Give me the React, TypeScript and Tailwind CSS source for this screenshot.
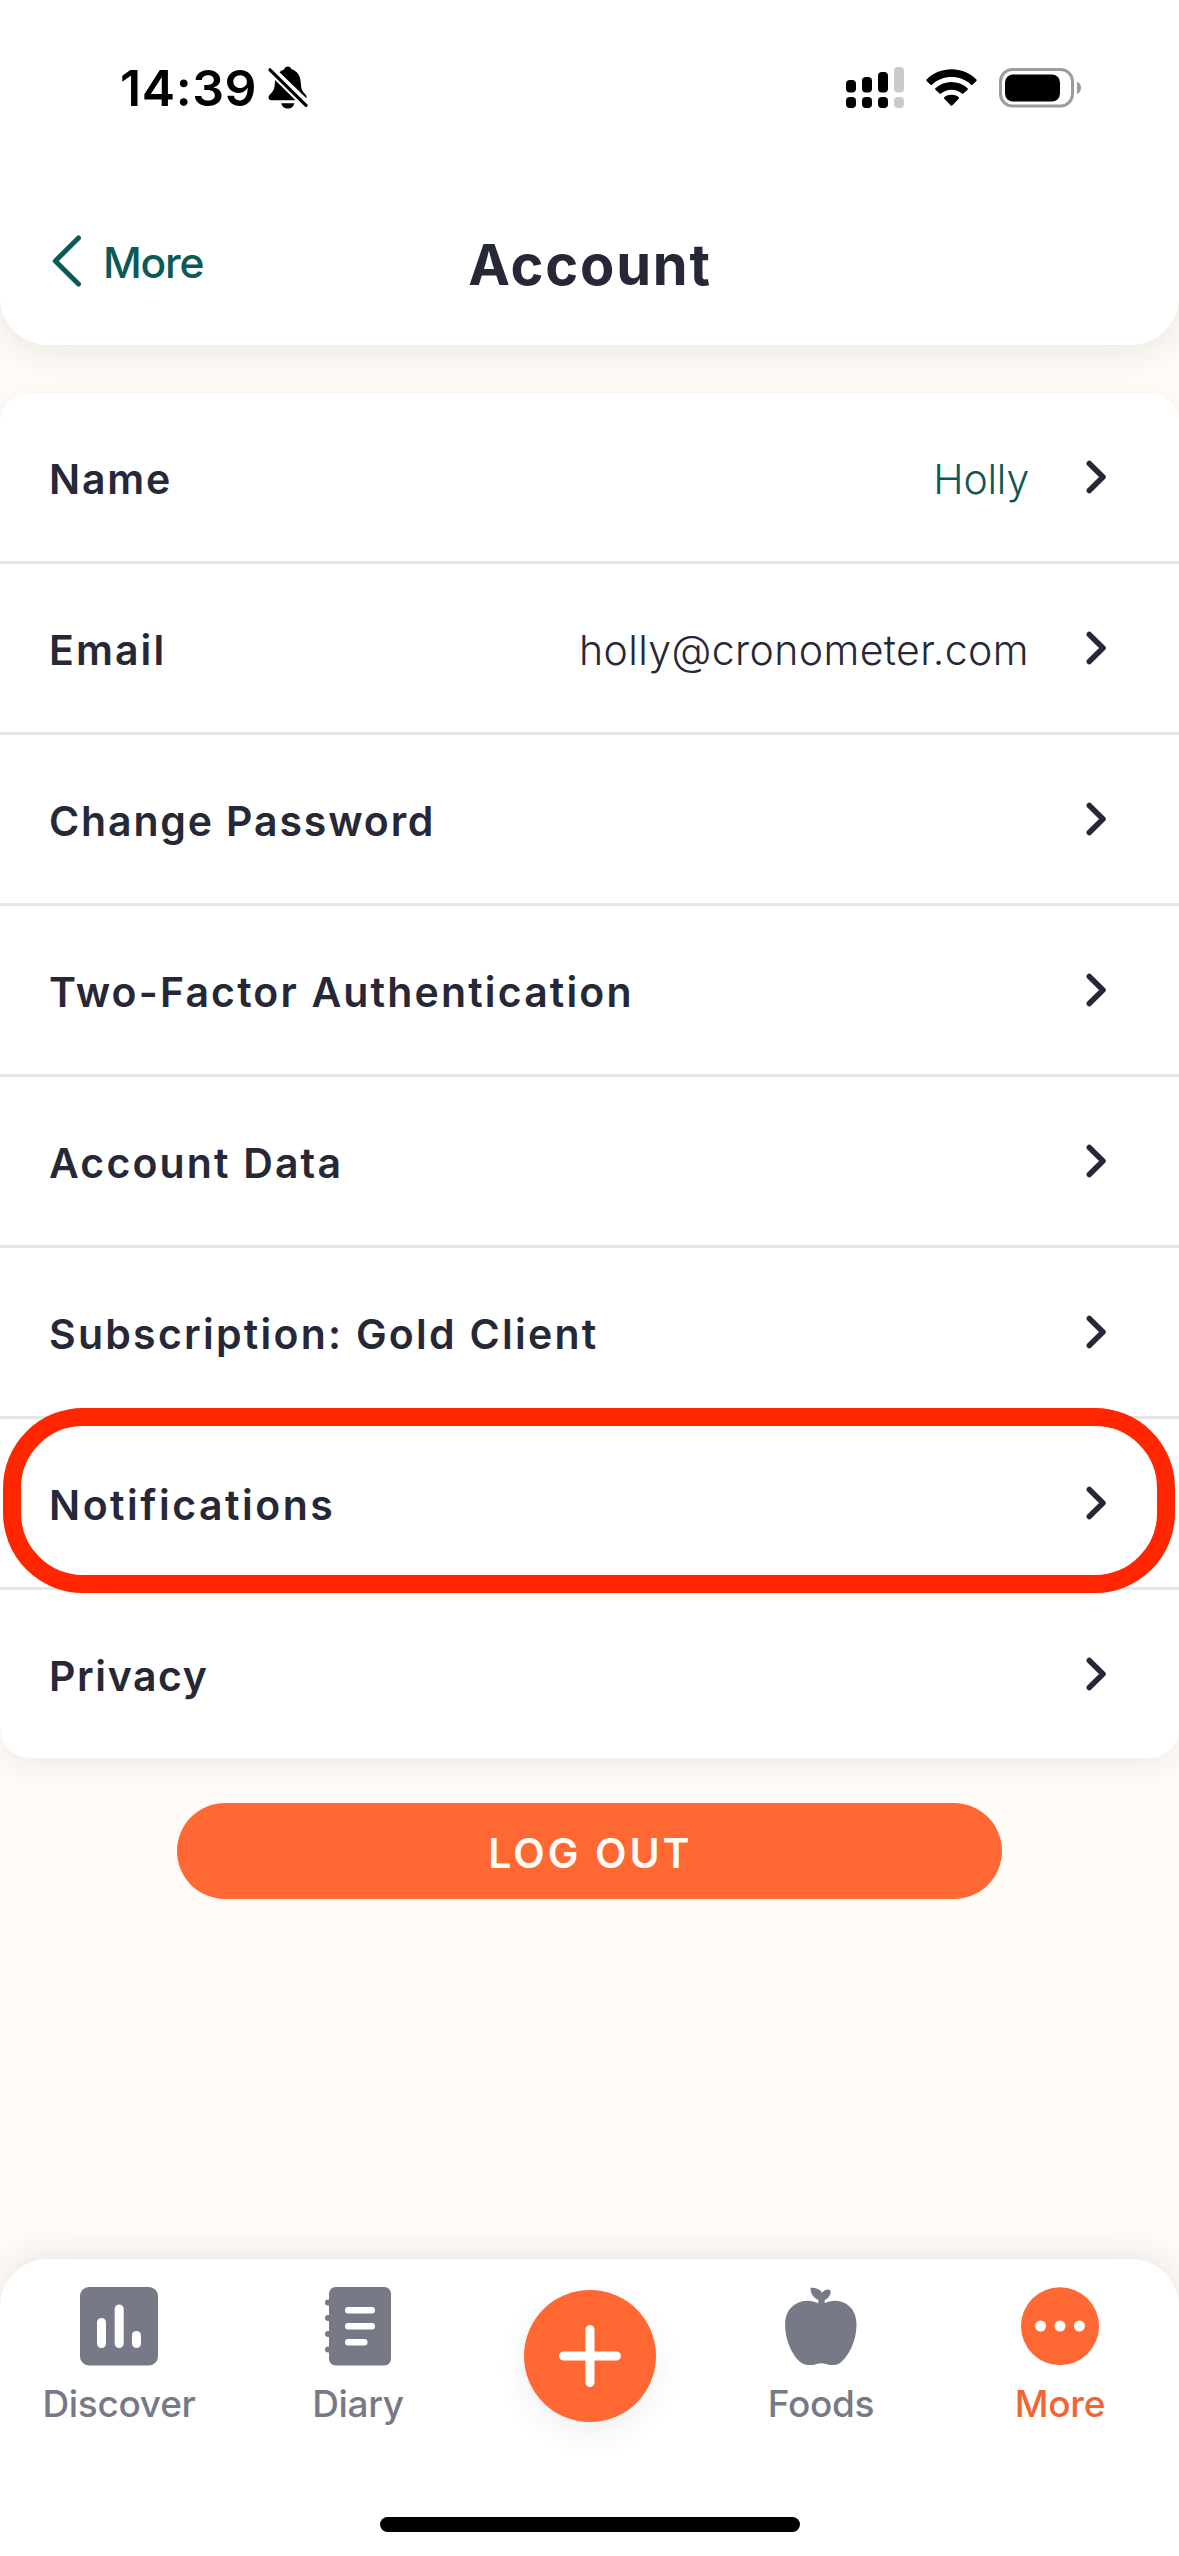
import { clsx } from "clsx";
import type { ReactNode } from "react";

type Row = {
  label: string;
  tracking: string;
  value?: string;
  valueClass?: string;
  highlighted?: boolean;
};

const rows: Row[] = [
  {
    label: "Name",
    tracking: "tracking-[1.8px]",
    value: "Holly",
    valueClass: "text-[#0f5753] tracking-[-0.2px]",
  },
  {
    label: "Email",
    tracking: "tracking-[2.1px]",
    value: "holly@cronometer.com",
    valueClass: "text-[#262838] tracking-[0.4px]",
  },
  { label: "Change Password", tracking: "tracking-[1.85px]" },
  { label: "Two-Factor Authentication", tracking: "tracking-[2.15px]" },
  { label: "Account Data", tracking: "tracking-[2.15px]" },
  { label: "Subscription: Gold Client", tracking: "tracking-[2.25px]" },
  { label: "Notifications", tracking: "tracking-[2.5px]", highlighted: true },
  { label: "Privacy", tracking: "tracking-[1.6px]" },
];

// iOS status bar: time, silent mode, dual SIM signal, wifi and battery
function StatusBar() {
  return (
    <div className="flex h-[174px] items-center justify-between pt-px pl-[120px] pr-[98px]">
      <div className="flex items-center gap-[11px]">
        <span className="text-[50px] leading-none font-semibold tracking-[0.6px]">14:39</span>
        <svg className="h-[44px] w-[40px]" viewBox="0 0 40 44" fill="currentColor">
          <path d="M11.5 6.2C13 4.8 14.6 4 16 3.4C16.6 1.4 18 .4 19.8 .4C21.6 .4 23 1.4 23.6 3.3C29.5 5.3 32.5 10 32.8 16.5C33.1 22 33.5 24.5 37.5 28.5C38.4 29.5 38.8 30.7 38.4 32.2Z" />
          <path d="M7 14L27.5 34.3H3.5C.2 34.3 -.4 30.8 1.8 28.6C6 24.5 6.8 22.5 7 14Z" />
          <path d="M13.2 37.3H26.4C25.6 40.6 23.2 42.6 19.8 42.6C16.4 42.6 14 40.6 13.2 37.3Z" />
          <path d="M2 3.8L38 39.4" fill="none" stroke="currentColor" strokeWidth="3.2" strokeLinecap="round" />
        </svg>
      </div>

      <div className="flex items-center">
        <svg className="h-[42px] w-[58px]" viewBox="0 0 58 42" fill="currentColor">
          <rect x="0" y="13" width="10" height="12.5" rx="4" />
          <rect x="16" y="10" width="10" height="15.5" rx="4" />
          <rect x="32" y="5" width="10" height="20.5" rx="4" />
          <rect x="48" y="0" width="10" height="25.5" rx="4" fill="#cbcbcb" />
          <rect x="0" y="30" width="10" height="11" rx="4" />
          <rect x="16" y="30" width="10" height="11" rx="4" />
          <rect x="32" y="30" width="10" height="11" rx="4" />
          <rect x="48" y="30" width="10" height="11" rx="4" fill="#cbcbcb" />
        </svg>
        <svg className="ml-[22px] h-[38px] w-[51px]" viewBox="0 0 51 38" fill="currentColor">
          <path d="M.6 10.6C14 -3.1 37 -3.1 50.4 10.6Q51 11.3 50.4 12L46.4 15.8Q45.7 16.3 45 15.7C34.5 5.5 16.5 5.5 6 15.7Q5.3 16.3 4.6 15.8L.6 12Q0 11.3 .6 10.6Z" />
          <path d="M9.4 19.3C18.5 10.9 32.5 10.9 41.6 19.3Q42.2 20 41.6 20.7L37.4 24.6Q36.7 25.2 36 24.6C30 19.5 21 19.5 15 24.6Q14.3 25.2 13.6 24.6L9.4 20.7Q8.8 20 9.4 19.3Z" />
          <path d="M18.3 28.2C22.3 25 28.7 25 32.7 28.2Q33.4 29 32.7 29.7L26.2 36.4Q25.5 37 24.8 36.4L18.3 29.7Q17.6 29 18.3 28.2Z" />
        </svg>
        <svg className="ml-[22px] h-[40px] w-[82px]" viewBox="0 0 82 40">
          <rect x="1.5" y="1.5" width="72" height="36.5" rx="12" fill="none" stroke="#9c9c9c" strokeWidth="3" />
          <rect x="6" y="6.5" width="55" height="27" rx="8" fill="#000" />
          <path d="M78 13.5C80.8 14.8 82 17 82 19.7C82 22.4 80.8 24.7 78 26Z" fill="#9c9c9c" />
        </svg>
      </div>
    </div>
  );
}

function Header() {
  return (
    <header className="relative h-[345px] shrink-0 rounded-b-[48px] bg-white shadow-[0_6px_36px_rgba(38,40,56,0.1)]">
      <StatusBar />
      <div className="grid h-[178px] grid-cols-[1fr_auto_1fr] items-center">
        <button className="flex items-center gap-[21px] pl-[52px] text-[#0b5a57]">
          <svg className="-mt-[5px] h-[52px] w-[30px]" viewBox="0 0 30 52" fill="none" stroke="currentColor" strokeWidth="5" strokeLinecap="round" strokeLinejoin="round">
            <path d="M26.5 3L3.3 26L26.5 49" />
          </svg>
          <span className="text-[42.5px] leading-none font-medium tracking-[-1.2px]">More</span>
        </button>
        <h1 className="pt-[3px] pl-px text-[56px] leading-none font-[650] tracking-[1.8px] text-[#262838]">
          Account
        </h1>
      </div>
    </header>
  );
}

function SettingsRow({ label, tracking, value, valueClass, highlighted }: Row) {
  return (
    <li className="relative flex h-[171px] items-center border-b-3 border-[#e5e6e8] pr-[70px] pl-[49px] last:h-[168px] last:border-b-0">
      <span className={clsx("pt-[4px] text-[41px] leading-none font-[570]", tracking)}>{label}</span>
      <span className={clsx("mr-[56px] ml-auto pt-[4px] text-[41px] leading-none font-light", valueClass)}>{value}</span>
      <svg className="h-[34px] w-[24px]" viewBox="0 0 24 34" fill="none" stroke="currentColor" strokeWidth="5.5" strokeLinecap="round" strokeLinejoin="round">
        <path d="M4.3 3.5L18 17L4.3 30.5" />
      </svg>

      {/* Ring around the highlighted row */}
      {highlighted && (
        <div className="absolute -top-[11px] left-[3px] z-10 h-[185px] w-[1172px] rounded-[80px] border-18 border-[#ff2600]"></div>
      )}
    </li>
  );
}

function Tab({ label, className, children }: { label: string; className: string; children: ReactNode }) {
  return (
    <a className={clsx("flex flex-col items-center pt-[28px]", className)}>
      {children}
      <span className="mt-[19px] text-[37px] leading-none font-[450] tracking-[-0.3px]">{label}</span>
    </a>
  );
}

function TabBar() {
  return (
    <nav className="mt-auto h-[297px] rounded-t-[48px] bg-white text-[#777986] shadow-[0_-4px_36px_rgba(38,40,56,0.1)]">
      <div className="flex h-[258px]">
        <Tab label="Discover" className="w-[238px]">
          <svg className="h-[79px] w-[78px]" viewBox="0 0 78 79" fill="currentColor">
            <rect width="78" height="78.5" rx="9" />
            <g fill="#fff">
              <rect x="17" y="31" width="9" height="30" rx="4.5" />
              <rect x="34.7" y="17.5" width="9" height="43.5" rx="4.5" />
              <rect x="52" y="44" width="9" height="17" rx="4.5" />
            </g>
          </svg>
        </Tab>

        <Tab label="Diary" className="w-[240px]">
          <svg className="h-[79px] w-[66px]" viewBox="0 0 66 79" fill="currentColor">
            <rect x="4" width="62" height="78.5" rx="6.5" />
            <rect x="0" y="12.5" width="8" height="6" rx="3" />
            <rect x="0" y="28" width="8" height="6" rx="3" />
            <rect x="0" y="44" width="8" height="6" rx="3" />
            <rect x="0" y="59.5" width="8" height="6" rx="3" />
            <g fill="#fff">
              <rect x="20" y="20" width="30" height="6.5" rx="3.25" />
              <rect x="20" y="36" width="30" height="6.5" rx="3.25" />
              <rect x="20" y="52" width="22.5" height="6.5" rx="3.25" />
            </g>
          </svg>
        </Tab>

        <div className="flex w-[223px] justify-center pt-[31px]">
          <button className="flex size-[132px] items-center justify-center rounded-full bg-[#ff6733] shadow-[0_12px_30px_rgba(38,40,56,0.07)]">
            <svg className="size-[62px]" viewBox="0 0 62 62" stroke="#fff" strokeWidth="9" strokeLinecap="round">
              <path d="M31 4.5V57.5M4.5 31H57.5" />
            </svg>
          </button>
        </div>

        <Tab label="Foods" className="w-[240px]">
          <svg className="h-[79px] w-[78px]" viewBox="2.5 12.3 78 79" fill="currentColor">
            <path d="M38.6 28.5C33 25.5 25 24.8 18 28.2C9 32.5 5.6 40.5 5.6 50C5.6 66 13.5 81.5 21 87.5C25.5 91 32 91 37 89.2C40.2 88.2 43.5 88.2 46.5 89.2C51.5 91 57.5 91 61.5 87.5C69.5 80.5 77 66 77 50C77 40.5 73.5 32.5 65 28.2C58 24.8 50.5 25.5 45.2 28.5Z" />
            <path d="M38.8 30.5V25.2C33.5 22.8 31 18.5 31 13C36.5 12.8 40.5 14.5 42.8 18C44.3 15.8 46.5 14.7 48.8 14.8C51.5 15.2 51.8 18 50.3 20.5C49.2 22.7 47.3 24.3 45.2 25.2V30.5Z" />
          </svg>
        </Tab>

        <Tab label="More" className="w-[238px] text-[#f06436]">
          <svg className="h-[79px] w-[78px]" viewBox="0 0 78 79">
            <circle cx="39" cy="39.2" r="39" fill="#ff6733" />
            <g fill="#fff">
              <circle cx="19.6" cy="39" r="5.5" />
              <circle cx="39" cy="39" r="5.5" />
              <circle cx="58.4" cy="39" r="5.5" />
            </g>
          </svg>
        </Tab>
      </div>

      {/* Home indicator */}
      <div className="mx-auto h-[15px] w-[420px] rounded-full bg-black"></div>
    </nav>
  );
}

export default function App() {
  return (
    <div className="flex h-[2556px] w-[1179px] flex-col overflow-hidden bg-[#fffbf6] font-[Inter,'Liberation_Sans',sans-serif] text-black">
      <Header />

      <ul className="mt-[48px] rounded-[30px] bg-white text-[#262838] shadow-[0_8px_30px_rgba(38,40,56,0.07)]">
        {rows.map((row) => (
          <SettingsRow key={row.label} {...row} />
        ))}
      </ul>

      <button className="mx-auto mt-[45px] flex h-[96px] w-[825px] shrink-0 items-center justify-center rounded-full bg-[#ff6733] pt-[4px] pl-[2px] text-[41px] leading-none font-[570] tracking-[3px] text-[#fffbf5]">
        LOG OUT
      </button>

      <TabBar />
    </div>
  );
}
